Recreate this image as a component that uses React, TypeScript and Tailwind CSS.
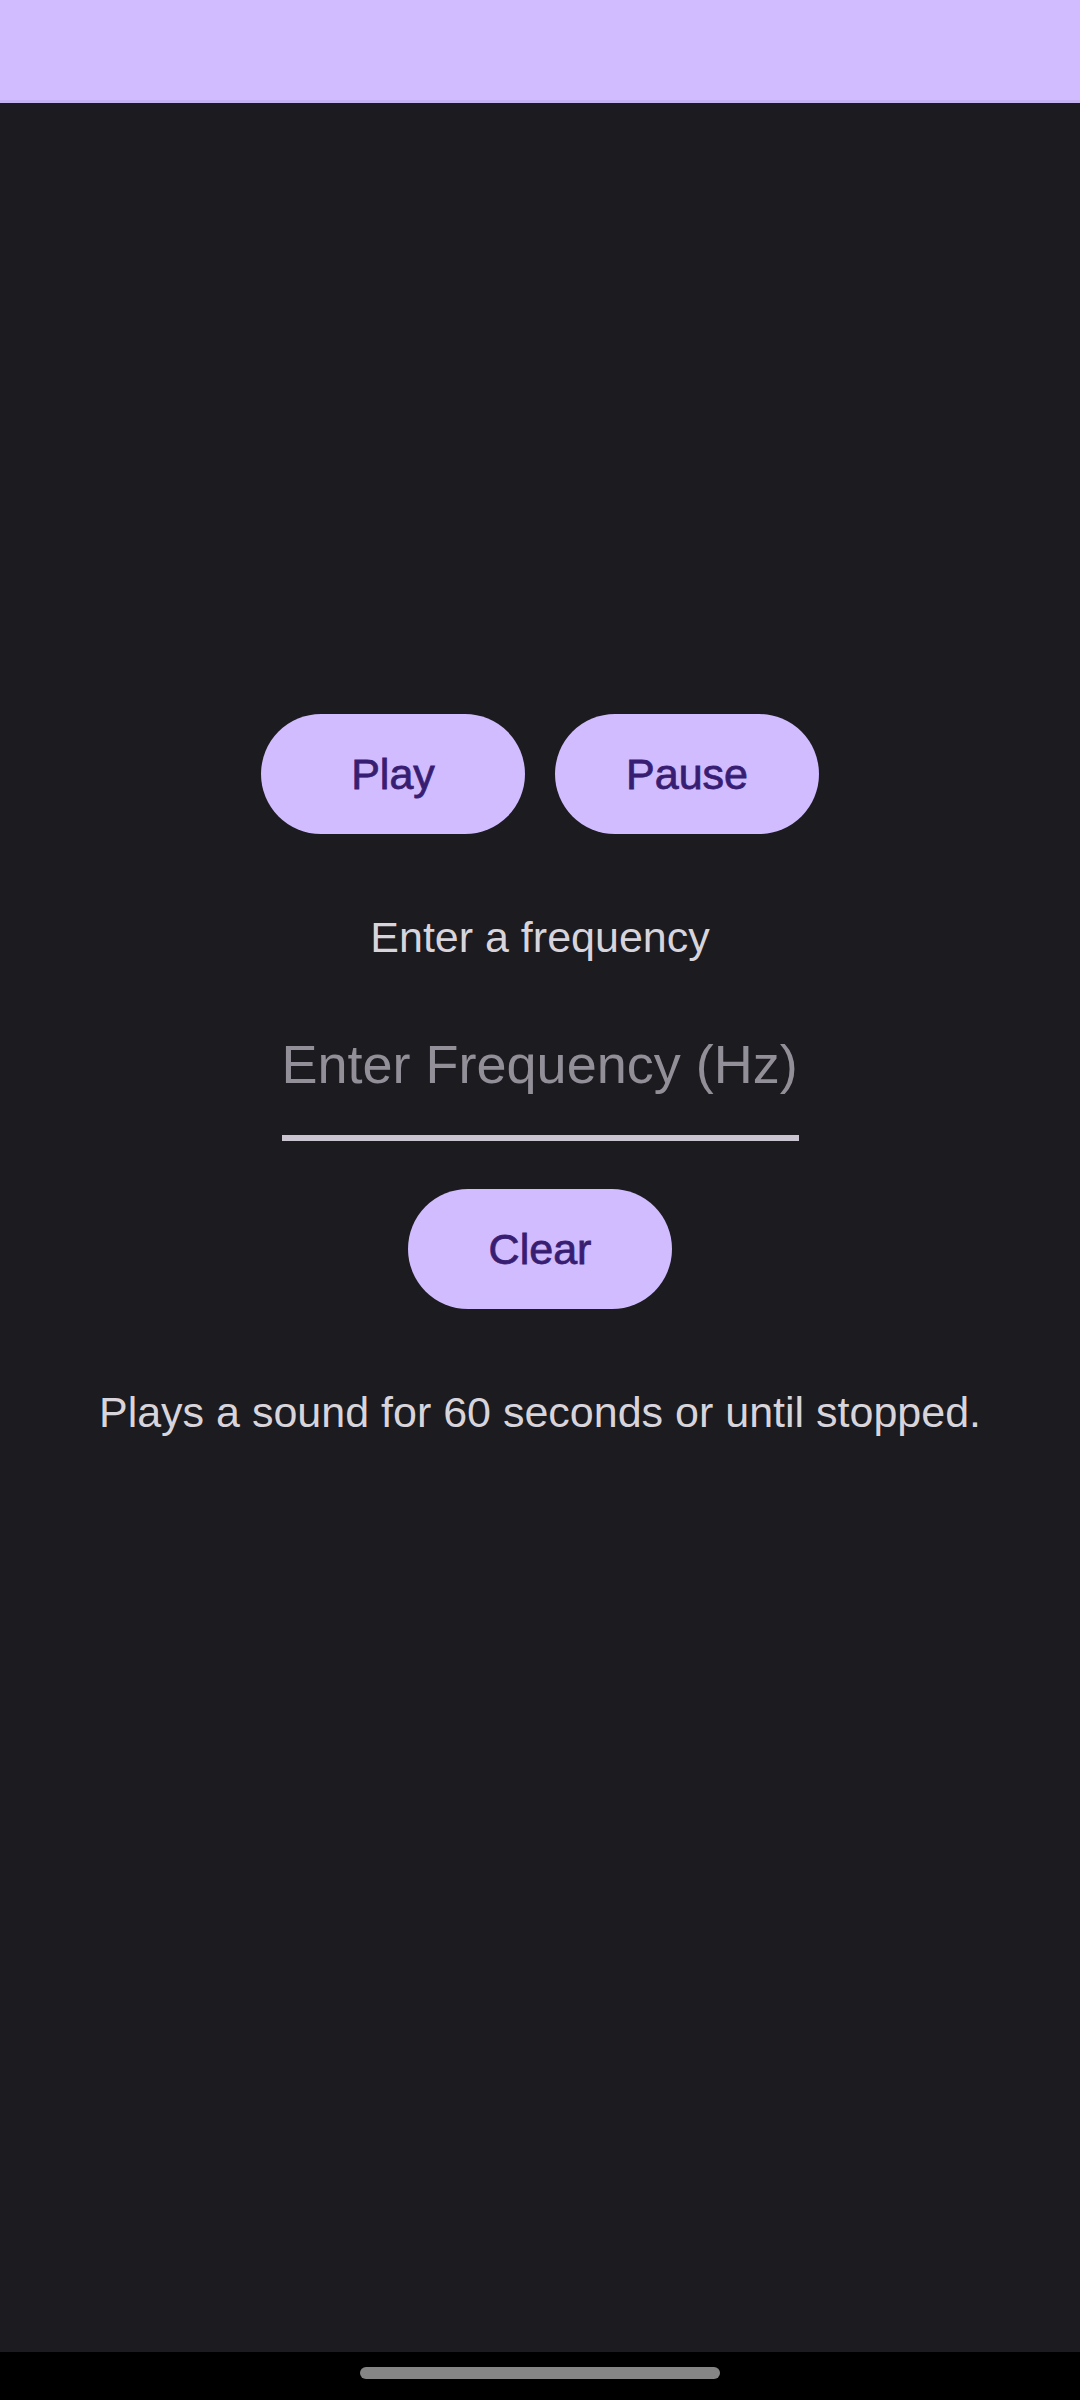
import { useState } from 'react';

const PillButton = ({ label, onClick }: { label: string; onClick?: () => void }) => {
  return (
    <button
      onClick={onClick}
      className="w-[264px] h-[120px] rounded-full bg-[#d0bcff] text-[#381e72] text-[43px] leading-[48px] [-webkit-text-stroke:0.8px_#381e72]"
      style={{ fontFamily: '"Liberation Sans", Arial, sans-serif' }}
    >
      {label}
    </button>
  );
};

const App = () => {
  const [frequency, setFrequency] = useState('');

  return (
    <div
      className="w-[1080px] h-[2400px] flex flex-col bg-[#1c1b1f]"
      style={{ fontFamily: '"Liberation Sans", Arial, sans-serif' }}
    >
      {/* status bar */}
      <div className="h-[103px] bg-[#d0bcff] border-b-[3px] border-[#c6b4f0]" />

      <div className="flex-1 flex flex-col items-center pt-[611px]">
        <div className="flex gap-[30px]">
          <PillButton label="Play" />
          <PillButton label="Pause" />
        </div>

        <p className="mt-[79px] text-[43px] leading-[48px] text-[#d8d4dc]">Enter a frequency</p>

        <div className="mt-[68px] w-[517px] pb-[36px] border-b-[6px] border-[#cac4d0]">
          <input
            value={frequency}
            onChange={(e) => setFrequency(e.target.value)}
            placeholder="Enter Frequency (Hz)"
            className="w-full bg-transparent outline-none text-[54px] leading-[70px] h-[70px] text-[#e6e1e5] placeholder:text-[#938f99]"
            style={{ fontFamily: '"Liberation Sans", Arial, sans-serif' }}
          />
        </div>

        <div className="mt-[48px]">
          <PillButton label="Clear" onClick={() => setFrequency('')} />
        </div>

        <p className="mt-[77px] text-[43px] leading-[52px] text-[#d8d4dc]">
          Plays a sound for 60 seconds or until stopped.
        </p>
      </div>

      {/* navigation bar */}
      <div className="h-[48px] bg-black flex justify-center pt-[15px]">
        <div className="w-[360px] h-[12px] rounded-full bg-[#858585]" />
      </div>
    </div>
  );
};

export default App;
